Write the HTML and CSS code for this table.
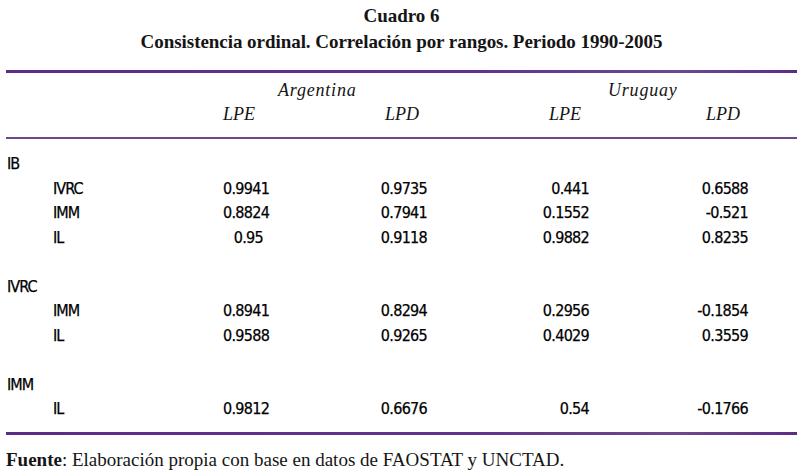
FILE: index.html
```html
<!DOCTYPE html>
<html lang="es">
<head>
<meta charset="utf-8">
<title>Cuadro 6</title>
<link rel="stylesheet" href="styles.css">
</head>
<body>
<div class="page">
  <div class="title">
    <div class="title-line">Cuadro 6</div>
    <div class="title-line">Consistencia ordinal. Correlación por rangos. Periodo 1990-2005</div>
  </div>
  <div class="rule-thick"></div>
  <div class="head">
    <div class="hrow">
      <div class="country arg">Argentina</div>
      <div class="country uru">Uruguay</div>
    </div>
    <div class="hrow">
      <div></div>
      <div class="hcell">LPE</div>
      <div class="hcell">LPD</div>
      <div class="hcell">LPE</div>
      <div class="hcell">LPD</div>
    </div>
  </div>
  <div class="rule-thin"></div>
  <div class="body">
    <div class="row"><div class="lab">IB</div></div>
    <div class="row"><div class="lab sub">IVRC</div><div class="num">0.9941</div><div class="num">0.9735</div><div class="num">0.441</div><div class="num">0.6588</div></div>
    <div class="row"><div class="lab sub">IMM</div><div class="num">0.8824</div><div class="num">0.7941</div><div class="num">0.1552</div><div class="num">-0.521</div></div>
    <div class="row"><div class="lab sub">IL</div><div class="num">0.95</div><div class="num">0.9118</div><div class="num">0.9882</div><div class="num">0.8235</div></div>
    <div class="row"></div>
    <div class="row"><div class="lab">IVRC</div></div>
    <div class="row"><div class="lab sub">IMM</div><div class="num">0.8941</div><div class="num">0.8294</div><div class="num">0.2956</div><div class="num">-0.1854</div></div>
    <div class="row"><div class="lab sub">IL</div><div class="num">0.9588</div><div class="num">0.9265</div><div class="num">0.4029</div><div class="num">0.3559</div></div>
    <div class="row"></div>
    <div class="row"><div class="lab">IMM</div></div>
    <div class="row"><div class="lab sub">IL</div><div class="num">0.9812</div><div class="num">0.6676</div><div class="num">0.54</div><div class="num">-0.1766</div></div>
  </div>
  <div class="rule-thick"></div>
  <div class="source"><b>Fuente</b>: Elaboración propia con base en datos de FAOSTAT y UNCTAD.</div>
</div>
</body>
</html>
```
FILE: styles.css
```css
html, body {
  margin: 0;
  padding: 0;
  background: #ffffff;
}

.page {
  width: 803px;
  height: 472px;
  box-sizing: border-box;
  padding: 3px 6px 0 6px;
  color: #151515;
}

.title {
  text-align: center;
  font-family: "Liberation Serif", "Times New Roman", serif;
  font-weight: bold;
  font-size: 19px;
  line-height: 26px;
  letter-spacing: -0.05px;
  margin-bottom: 15px;
}

.rule-thick {
  height: 3px;
  background: linear-gradient(to right, #5b2d83 0%, #613489 60%, #6e4694 85%, #5b2d83 100%);
}

.rule-thin {
  height: 2px;
  background: #6a4a8c;
}

.head {
  padding: 5px 0 11px 0;
  font-family: "Liberation Serif", "Times New Roman", serif;
  font-style: italic;
  font-size: 18px;
}

.hrow {
  display: grid;
  grid-template-columns: 217px 204px 321px 1fr;
  height: 24px;
  line-height: 24px;
}

.hrow:last-child {
  grid-template-columns: 217px 40px 164px 162px 159px 1fr;
}

.country {
  letter-spacing: 0.8px;
}

.country.arg {
  grid-column: 2;
  padding-left: 55px;
}

.country.uru {
  grid-column: 3;
  padding-left: 181px;
}

.hcell {
  text-align: right;
  padding-right: 8px;
  white-space: nowrap;
}

.body {
  padding: 13px 0 10px 0;
  font-family: "DejaVu Sans Condensed", "DejaVu Sans", sans-serif;
  font-stretch: condensed;
  font-size: 16px;
  letter-spacing: -0.7px;
  color: #000;
  -webkit-text-stroke: 0.25px #000;
}

.row {
  display: grid;
  grid-template-columns: 217px 40px 164px 162px 159px 1fr;
  height: 24.5px;
  line-height: 24.5px;
}

.lab {
  letter-spacing: -0.9px;
  padding-left: 1px;
}

.lab.sub {
  padding-left: 47px;
}

.num {
  text-align: right;
  white-space: nowrap;
}

.source {
  margin-top: 13px;
  font-family: "Liberation Serif", "Times New Roman", serif;
  font-size: 19px;
  line-height: 24px;
}

.source b {
  font-weight: bold;
}
```
